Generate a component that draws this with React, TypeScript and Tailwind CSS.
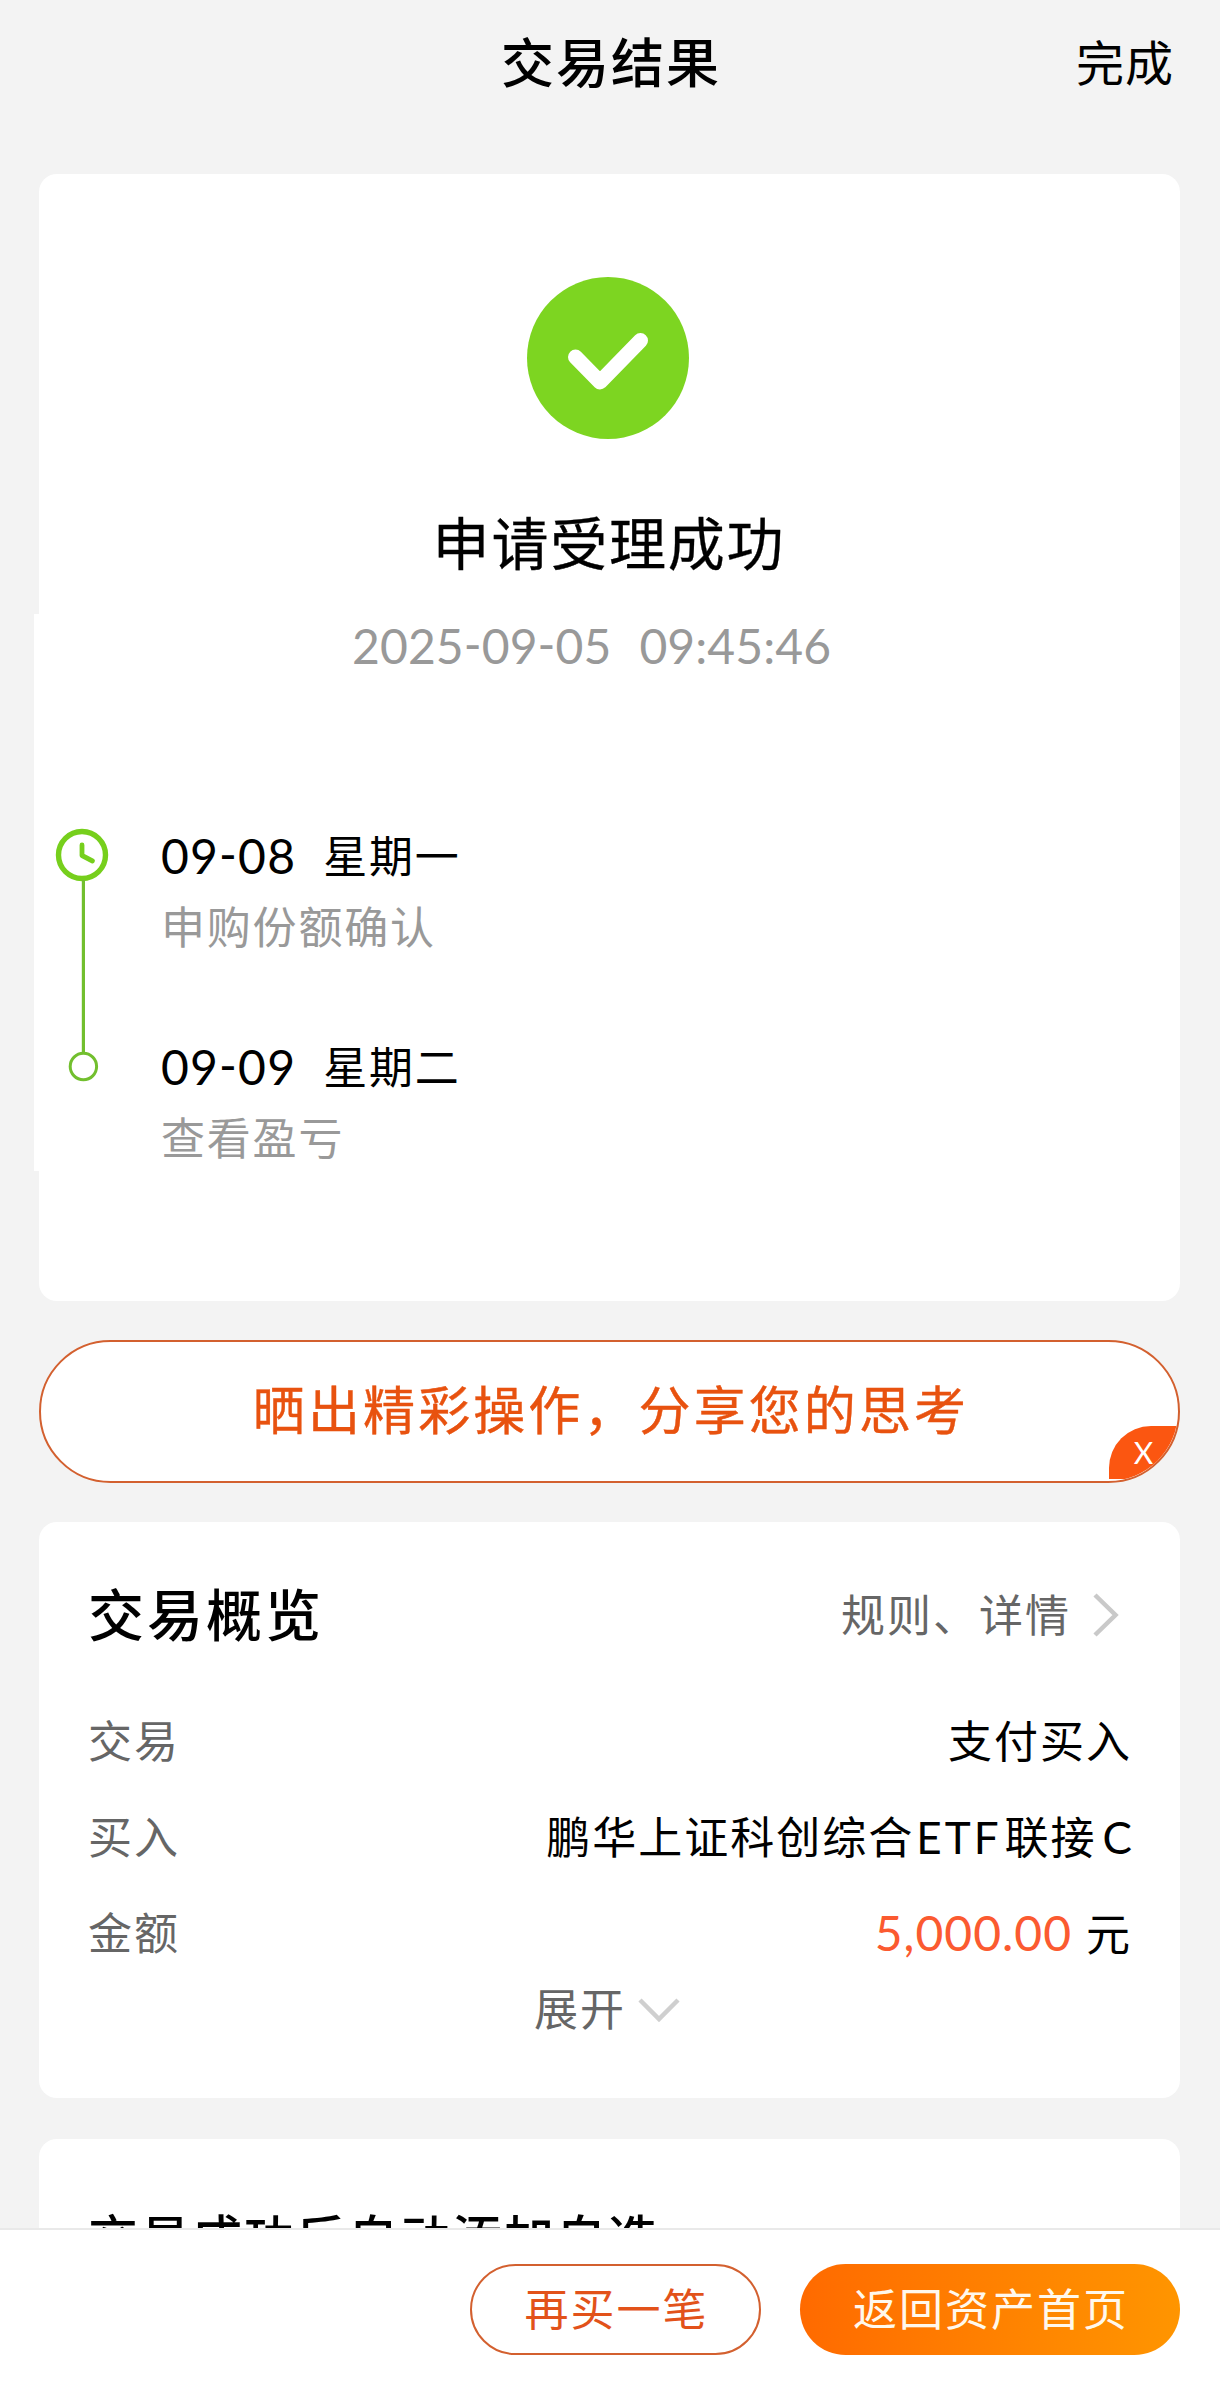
import clsx from "clsx";

type Step = {
    date: string;
    weekday: string;
    desc: string;
}

type RowProps = {
    label: string;
    children: React.ReactNode;
}

const steps: Step[] = [
    { date: "09-08", weekday: "星期一", desc: "申购份额确认" },
    { date: "09-09", weekday: "星期二", desc: "查看盈亏" },
];

const Header = () => (
    <header className="grid h-[174px] grid-cols-[1fr_auto_1fr] items-start pt-[33px] leading-[60px] text-black">
        <span />
        <h1 className="pl-[2px] text-[53px] font-medium tracking-[2px]">交易结果</h1>
        <button className="pr-[46px] text-right text-[48px] leading-[60px] tracking-[1px]">完成</button>
    </header>
);

const SuccessIcon = () => (
    <svg className="ml-[488px] size-[162px]" viewBox="0 0 162 162" fill="none">
        <circle cx="81" cy="81" r="81" fill="#7dd521" />
        <path d="M48.5 80 L73 105 L113.5 63.5" stroke="#fff" strokeWidth="15" strokeLinecap="round" strokeLinejoin="round" />
    </svg>
);

// 时钟 -> 竖线 -> 圆点
const TimelineMark = () => (
    <svg className="ml-[21px] mt-[2px] h-[254px] w-[54px] shrink-0" viewBox="0 0 54 254" fill="none">
        <circle cx="27" cy="27" r="23.5" stroke="#76cf1c" strokeWidth="5.4" />
        <path d="M27 17 V27.5 L37.5 33" stroke="#76cf1c" strokeWidth="4.8" strokeLinecap="round" strokeLinejoin="round" />
        <path d="M28.4 52 V224" stroke="#72bf2e" strokeWidth="3.2" />
        <circle cx="28.4" cy="238.5" r="13.2" stroke="#72bf2e" strokeWidth="3" />
    </svg>
);

const ResultCard = () => (
    <section className="h-[1127px] rounded-[18px] bg-white pt-[103px]">
        <SuccessIcon />
        <h2 className="mt-[74px] pr-px text-center text-[57px] leading-[60px] tracking-[1.8px] text-black [-webkit-text-stroke:0.3px_black]">
            申请受理成功
        </h2>
        <div className="-ml-[5px] mt-[41px] h-[557px] bg-white pt-[2px]">
            <p className="flex gap-[28px] pl-[318px] text-[48px] leading-[60px] tracking-[0.1px] text-[#999] [font-feature-settings:'case']">
                <span>2025-09-05</span>
                <span>09:45:46</span>
            </p>
            <div className="mt-[150px] flex">
                <TimelineMark />
                <ul className="ml-[52px]">
                    {steps.map((step) => (
                        <li key={step.date} className="h-[211px]">
                            <p className="flex gap-[27px] leading-[60px] text-black">
                                <span className="text-[48px] tracking-[1.2px] [font-feature-settings:'case']">{step.date}</span>
                                <span className="text-[44px] tracking-[1.8px]">{step.weekday}</span>
                            </p>
                            <p className="mt-4 text-[44px] leading-[50px] tracking-[1.8px] text-[#999]">{step.desc}</p>
                        </li>
                    ))}
                </ul>
            </div>
        </div>
    </section>
);

const ShareBanner = () => (
    <div className="relative mt-[39px] h-[143px] overflow-hidden rounded-full border-2 border-[#d3602f] bg-white">
        <p className="pl-[3px] pt-[38px] text-center text-[52px] leading-[60px] tracking-[3.1px] text-[#e8520f] [-webkit-text-stroke:0.4px_#e8520f]">
            晒出精彩操作，分享您的思考
        </p>
        <button className="absolute bottom-[2px] right-0 h-[53px] w-[69px] rounded-tl-[42px] bg-[#fb5611] text-center text-[30px] leading-[53px] text-white">
            X
        </button>
    </div>
);

const Row = ({ label, children }: RowProps) => (
    <div className="flex h-24 items-center justify-between text-[44px] leading-[60px] tracking-[2px]">
        <span className="text-[#666]">{label}</span>
        <span className="text-black">{children}</span>
    </div>
);

const OverviewCard = () => (
    <section className="mt-[39px] h-[576px] rounded-[18px] bg-white pl-[49px] pr-[48px] pt-[63px]">
        <div className="flex items-center justify-between leading-[60px]">
            <h3 className="text-[56px] font-medium tracking-[3px] text-black">交易概览</h3>
            <button className="flex items-center pr-[12px] text-[44px] leading-[60px] tracking-[2px] text-[#666]">
                规则、详情
                <svg className="ml-[21px] h-[44px] w-[28px]" viewBox="0 0 28 44" fill="none">
                    <path d="M3 2 L23.5 22 L3 42" stroke="#c9c9c9" strokeWidth="4.5" />
                </svg>
            </button>
        </div>
        <div className="mt-[48px]">
            <Row label="交易">支付买入</Row>
            <Row label="买入">
                <span className="-mr-[2px] whitespace-nowrap tracking-[2px]">
                    鹏华上证科创综合<span className="ml-[2px] mr-[3px] tracking-[3px]">ETF</span>联接<span className="ml-[6px]">C</span>
                </span>
            </Row>
            <Row label="金额">
                <span className="mr-[14px] text-[48px] tracking-[1px] text-[#fb5a30]">5,000.00</span>元
            </Row>
        </div>
        <button className="ml-[446px] flex items-center text-[44px] leading-[56px] tracking-[2px] text-[#666]">
            展开
            <svg className="ml-[12px] h-[28px] w-[42px]" viewBox="0 0 42 28" fill="none">
                <path d="M2 5 L21 24 L40 5" stroke="#cfcfcf" strokeWidth="4.5" />
            </svg>
        </button>
    </section>
);

const FooterButton = ({ primary, children }: { primary?: boolean; children: React.ReactNode }) => (
    <button
        className={clsx(
            "h-[91px] rounded-full pb-[2px] pl-[2px] text-[44px] tracking-[2px]",
            primary
                ? "w-[380px] bg-linear-to-r from-[#ff6a00] to-[#ff9500] text-[#fff8ec]"
                : "w-[291px] border-2 border-[#d3602f] bg-white text-[#e2521a]"
        )}
    >
        {children}
    </button>
);

const App = () => {
    return (
        <div className="flex h-[2403px] w-[1220px] flex-col overflow-hidden bg-[#f3f3f3] font-['Lato','Noto_Sans_CJK_SC',sans-serif]">
            <Header />
            <main className="h-[2054px] overflow-hidden pl-[39px] pr-10">
                <ResultCard />
                <ShareBanner />
                <OverviewCard />
                <section className="mt-[41px] h-[200px] rounded-t-[18px] bg-white pl-[49px] pt-[69px]">
                    <h3 className="text-[50px] font-medium leading-[60px] tracking-[2px] text-black">交易成功后自动添加自选</h3>
                </section>
            </main>
            <footer className="flex grow justify-end gap-[39px] border-t-2 border-[#e9e9e9] bg-white pr-10 pt-[34px]">
                <FooterButton>再买一笔</FooterButton>
                <FooterButton primary>返回资产首页</FooterButton>
            </footer>
        </div>
    );
};

export default App;
